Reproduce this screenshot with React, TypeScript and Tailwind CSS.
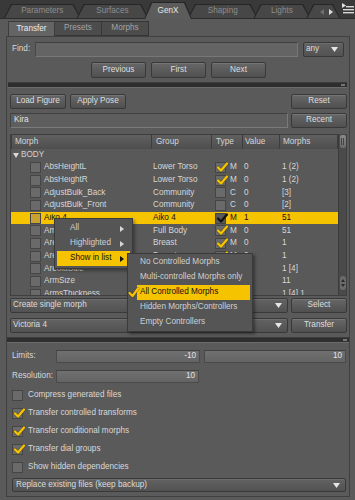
import React from 'react';

const YEL = 'bg-[#f6c300]';

function TriDown() {
  return (
    <svg width="7" height="5" viewBox="0 0 7 5" className="shrink-0">
      <polygon points="0,0 7,0 3.5,5" fill="#e6e6e6" />
    </svg>
  );
}

function TriRight({ color }: { color: string }) {
  return (
    <svg width="4" height="6" viewBox="0 0 4 6" className="shrink-0">
      <polygon points="0,0 4,3 0,6" fill={color} />
    </svg>
  );
}

function CheckMark({ dark }: { dark?: boolean }) {
  return (
    <svg
      width="13"
      height="12"
      viewBox="0 0 13 12"
      className="absolute left-[0px] top-[-2px] overflow-visible"
    >
      {!dark && (
        <polyline
          points="2,6.5 5,9.5 11,2.5"
          fill="none"
          stroke="#3a3000"
          strokeWidth="3.4"
          strokeLinecap="round"
          strokeLinejoin="round"
          opacity="0.45"
        />
      )}
      <polyline
        points="2,6.5 5,9.5 11,2.5"
        fill="none"
        stroke={dark ? '#111111' : '#f8c400'}
        strokeWidth="2.3"
        strokeLinecap="round"
        strokeLinejoin="round"
      />
    </svg>
  );
}

function Box({ checked, dark, tint }: { checked?: boolean; dark?: boolean; tint?: boolean }) {
  return (
    <div
      className={
        'relative w-[11px] h-[11px] shrink-0 border border-[#454545] ' +
        (tint ? 'bg-[#c9a133]' : dark ? 'bg-[#5a5a5a]' : 'bg-[#6a6a6a]')
      }
    >
      {checked && <CheckMark dark={dark} />}
    </div>
  );
}

function Btn({ label, className }: { label: string; className?: string }) {
  return (
    <div
      className={
        'flex items-center justify-center shrink-0 border border-[#393939] rounded-[2px] bg-linear-to-b from-[#676767] to-[#505050] text-[#dedede] shadow-[inset_0_1px_0_rgba(255,255,255,0.10)] ' +
        (className || '')
      }
    >
      {label}
    </div>
  );
}

function Combo({ label, className }: { label: string; className?: string }) {
  return (
    <div
      className={
        'flex items-center justify-between pl-[2px] pr-[5px] border border-[#393939] rounded-[2px] bg-linear-to-b from-[#626262] to-[#525252] text-[#dcdcdc] shadow-[inset_0_1px_0_rgba(255,255,255,0.08)] ' +
        (className || '')
      }
    >
      <span>{label}</span>
      <TriDown />
    </div>
  );
}

function Splitter({ className }: { className?: string }) {
  return (
    <div
      className={
        'h-[6px] bg-[#2e2e2e] border-t border-[#3c3c3c] border-b border-b-[#6c6c6c] flex items-center justify-end pr-[2px] ' +
        (className || '')
      }
    >
      <div className="w-[4px] h-[2px] bg-[#777]" />
    </div>
  );
}

function Tab({ label, active, className }: { label: React.ReactNode; active?: boolean; className?: string }) {
  return (
    <div
      className={
        'p-[1px] pb-0 bg-[#262626] [clip-path:polygon(7px_0,calc(100%_-_7px)_0,100%_100%,0_100%)] ' +
        (active ? 'h-[17px] -mb-[1px] relative z-10 ' : 'h-[14px] ') +
        (className || '')
      }
    >
      <div
        className={
          'h-full flex items-center justify-center [clip-path:polygon(7px_0,calc(100%_-_7px)_0,100%_100%,0_100%)] ' +
          (active ? 'bg-[#5c5c5c] text-[#e6e6e6] pt-[1px]' : 'bg-[#474747] text-[#8d8d8d]')
        }
      >
        {label}
      </div>
    </div>
  );
}

type Row = { n: string; g: string; c: boolean; t: string; v: string; m: string; hl?: boolean };
const rows: Row[] = [
  { n: 'AbsHeightL', g: 'Lower Torso', c: true, t: 'M', v: '0', m: '1 (2)' },
  { n: 'AbsHeightR', g: 'Lower Torso', c: true, t: 'M', v: '0', m: '1 (2)' },
  { n: 'AdjustBulk_Back', g: 'Community', c: false, t: 'C', v: '0', m: '[3]' },
  { n: 'AdjustBulk_Front', g: 'Community', c: false, t: 'C', v: '0', m: '[2]' },
  { n: 'Aiko 4', g: 'Aiko 4', c: true, t: 'M', v: '1', m: '51', hl: true },
  { n: 'Amazon', g: 'Full Body', c: true, t: 'M', v: '0', m: '51' },
  { n: 'AreolaPerk', g: 'Breast', c: true, t: 'M', v: '0', m: '1' },
  { n: 'AreolaPuffy', g: 'Breast', c: true, t: 'M', v: '0', m: '1' },
  { n: 'AreolaSize', g: 'Breast', c: true, t: 'M', v: '0', m: '1 [4]' },
  { n: 'ArmSize', g: 'Arms', c: true, t: 'M', v: '0', m: '11' },
  { n: 'ArmsThickness', g: 'Arms', c: true, t: 'M', v: '0', m: '1 [4] 1' },
];

function HeadCell({ label, className }: { label: string; className?: string }) {
  return (
    <div
      className={
        'h-full flex items-center border-r border-[#3d3d3d] bg-linear-to-b from-[#606060] to-[#4e4e4e] text-[#d6d6d6] ' +
        (className || '')
      }
    >
      {label}
    </div>
  );
}

function Field({ value, className }: { value: string; className?: string }) {
  return (
    <div
      className={
        'h-full flex items-center justify-end pr-[3px] bg-linear-to-b from-[#707070] to-[#646464] border border-[#4a4a4a] border-t-[#424242] text-[#e4e4e4] ' +
        (className || '')
      }
    >
      {value}
    </div>
  );
}

export default function App() {
  return (
    <div className="w-[355px] h-[500px] overflow-hidden bg-[#585858] font-['Liberation_Sans',Arial,sans-serif] text-[8.2px] leading-none select-none">
      {/* main tab strip */}
      <div className="h-[18px] bg-[#393939] flex items-end pl-[4px]">
        <Tab label="Parameters" className="w-[77px]" />
        <Tab label="Surfaces" className="w-[72px] -ml-[4px]" />
        <Tab label="GenX" active className="w-[48px] -ml-[4px]" />
        <Tab label="Shaping" className="w-[70px] -ml-[4px]" />
        <Tab label="Lights" className="w-[57px] -ml-[4px]" />
        <Tab
          label={
            <div className="flex items-center gap-[5px] pl-[6px]">
              <svg width="4" height="6" viewBox="0 0 4 6">
                <polygon points="4,0 0,3 4,6" fill="#6f6f6f" />
              </svg>
              <TriRight color="#dcdcdc" />
            </div>
          }
          className="w-[34px] -ml-[4px]"
        />
        <div className="w-[15px] h-[18px] flex items-start justify-center pt-[3px]">
          <svg width="12" height="12" viewBox="0 0 12 12">
            <polygon points="0,0 4,2.5 0,5" fill="#e0e0e0" />
            <rect x="4" y="3" width="8" height="1.4" fill="#d8d8d8" />
            <rect x="1" y="6" width="11" height="1.4" fill="#d8d8d8" />
            <rect x="1" y="9" width="11" height="1.4" fill="#d8d8d8" />
          </svg>
        </div>
      </div>

      {/* outer panel */}
      <div className="h-[482px] border-t border-[#2c2c2c] bg-[#5a5a5a] flex flex-col">
        {/* sub tabs */}
        <div className="flex h-[15px] mt-[2px] ml-[8px]">
          <div className="w-[47px] h-full flex items-center justify-center bg-[#646464] border border-[#3d3d3d] border-b-0 text-[#ececec] relative z-10 -mb-[1px]">
            Transfer
          </div>
          <div className="w-[47px] h-full flex items-center justify-center bg-[#4c4c4c] border border-[#363636] border-l-0 text-[#a3a3a3]">
            Presets
          </div>
          <div className="w-[47px] h-full flex items-center justify-center bg-[#4c4c4c] border border-[#363636] border-l-0 text-[#a3a3a3]">
            Morphs
          </div>
        </div>

        {/* content frame */}
        <div className="relative ml-[6px] w-[344px] h-[461px] border border-[#404040] bg-[#5a5a5a] pl-[3px] pr-[2px] flex flex-col text-[#d8d8d8]">
          {/* find row */}
          <div className="mt-[5px] h-[15px] flex items-center">
            <div className="ml-[2px] w-[23px]">Find:</div>
            <div className="flex-1 h-full bg-[#646464] border border-[#777] border-t-[#3e3e3e] border-l-[#474747]" />
            <Combo label="any" className="ml-[5px] mr-[3px] w-[41px] h-full" />
          </div>

          {/* nav buttons */}
          <div className="mt-[5px] h-[16px] flex gap-[5px] pl-[81px]">
            <Btn label="Previous" className="w-[55px] h-full" />
            <Btn label="First" className="w-[55px] h-full" />
            <Btn label="Next" className="w-[55px] h-full" />
          </div>

          <Splitter className="mt-[4px] -ml-[2px]" />

          {/* load row */}
          <div className="mt-[6px] h-[15px] flex">
            <Btn label="Load Figure" className="w-[56px] h-full" />
            <Btn label="Apply Pose" className="ml-[4px] w-[56px] h-full" />
            <div className="flex-1" />
            <Btn label="Reset" className="w-[56px] h-full" />
          </div>

          {/* figure row */}
          <div className="mt-[4px] h-[15px] flex">
            <div className="flex-1 h-full flex items-center pl-[3px] bg-[#5e5e5e] border border-[#7a7a7a] border-t-[#404040] border-l-[#444] text-[#e2e2e2]">
              Kira
            </div>
            <Btn label="Recent" className="ml-[3px] w-[56px] h-full" />
          </div>

          {/* table */}
          <div className="mt-[6px] h-[162px] flex border border-[#3f3f3f] border-t-0">
            <div className="flex-1 flex flex-col overflow-hidden">
              <div className="h-[15px] flex shrink-0 border-t border-[#3d3d3d]">
                <HeadCell label="Morph" className="w-[141px] pl-[3px] border-l border-l-[#3d3d3d]" />
                <HeadCell label="Group" className="w-[60px] pl-[4px]" />
                <HeadCell label="Type" className="w-[31px] pl-[4px]" />
                <HeadCell label="Value" className="w-[37px] pl-[2px]" />
                <HeadCell label="Morphs" className="flex-1 pl-[3px]" />
              </div>
              <div className="flex-1 overflow-hidden bg-[#595959]">
                <div className="h-[12px] flex items-center pl-[2px] gap-[2px] text-[#d2d2d2]">
                  <svg width="6" height="5" viewBox="0 0 6 5">
                    <polygon points="0,0 6,0 3,5" fill="#d8d8d8" />
                  </svg>
                  <span>BODY</span>
                </div>
                {rows.map((r) => (
                  <div
                    key={r.n}
                    className={
                      'h-[12.7px] flex items-center ' +
                      (r.hl ? YEL + ' text-[#111]' : 'text-[#d6d6d6]')
                    }
                  >
                    <div className="w-[19px] shrink-0" />
                    <Box tint={r.hl} />
                    <div className="w-[110px] pl-[3px] shrink-0 whitespace-nowrap overflow-hidden">{r.n}</div>
                    <div className="w-[62px] pl-[2px] shrink-0 whitespace-nowrap">{r.g}</div>
                    <div className="w-[29px] pl-[2px] shrink-0 flex items-center gap-[4px]">
                      <Box checked={r.c} dark={r.hl} />
                      <span>{r.t}</span>
                    </div>
                    <div className="w-[38px] pl-[2px] shrink-0">{r.v}</div>
                    <div className="flex-1 pl-[2px] whitespace-nowrap">{r.m}</div>
                  </div>
                ))}
              </div>
            </div>
            {/* scrollbar */}
            <div className="w-[8px] bg-[#4a4a4a] border-l border-[#3c3c3c] flex flex-col items-center justify-between py-[1px]">
              <div className="w-[6px] h-[13px] rounded-[2px] bg-linear-to-b from-[#8a8a8a] to-[#6a6a6a] flex items-center justify-center gap-[1px]">
                <div className="w-[1px] h-[7px] bg-[#444]" />
                <div className="w-[1px] h-[7px] bg-[#444]" />
              </div>
              <div className="w-[6px] h-[14px] mb-[4px] rounded-[3px] bg-[#6b6b6b] flex flex-col items-center justify-center gap-[2px]">
                <svg width="4" height="3" viewBox="0 0 4 3">
                  <polygon points="0,3 4,3 2,0" fill="#2a2a2a" />
                </svg>
                <svg width="4" height="3" viewBox="0 0 4 3">
                  <polygon points="0,0 4,0 2,3" fill="#2a2a2a" />
                </svg>
              </div>
            </div>
          </div>

          {/* create row */}
          <div className="mt-[2px] h-[15px] flex">
            <Combo label="Create single morph" className="flex-1 h-full" />
            <Btn label="Select" className="ml-[3px] w-[56px] h-full" />
          </div>
          <div className="mt-[5px] h-[15px] flex">
            <Combo label="Victoria 4" className="flex-1 h-full" />
            <Btn label="Transfer" className="ml-[3px] w-[56px] h-full" />
          </div>

          <Splitter className="mt-[4px] -ml-[3px] -mr-[2px]" />

          {/* limits */}
          <div className="mt-[7px] h-[13px] flex items-center">
            <div className="ml-[2px] w-[44px]">Limits:</div>
            <Field value="-10" className="w-[144px]" />
            <Field value="10" className="ml-[4px] flex-1 mr-[1px]" />
          </div>
          <div className="mt-[7px] h-[13px] flex items-center">
            <div className="ml-[2px] w-[44px]">Resolution:</div>
            <Field value="10" className="w-[143px]" />
          </div>

          {/* checkboxes */}
          <div className="mt-[3px] flex flex-col">
            {[
              ['Compress generated files', false],
              ['Transfer controlled transforms', true],
              ['Transfer conditional morphs', true],
              ['Transfer dial groups', true],
              ['Show hidden dependencies', false],
            ].map(([label, on]) => (
              <div key={label as string} className="h-[18px] flex items-center pl-[2px] gap-[5px]">
                <Box checked={on as boolean} />
                <span>{label as string}</span>
              </div>
            ))}
          </div>

          <Combo label="Replace existing files (keep backup)" className="mt-[2px] h-[14px] ml-[2px] mr-[1px] pl-[3px]" />

          {/* context menu */}
          <div className="absolute left-[47px] top-[181px] w-[79px] h-[51px] z-20 bg-[#555] border border-[#3a3a3a] shadow-[2px_2px_3px_rgba(0,0,0,0.35)] pt-[2px] px-[2px] text-[#d0d0d0]">
            <div className="h-[15px] flex items-center justify-between pl-[13px] pr-[6px]">
              <span>All</span>
              <TriRight color="#d8d8d8" />
            </div>
            <div className="h-[15px] flex items-center justify-between pl-[13px] pr-[6px]">
              <span>Highlighted</span>
              <TriRight color="#d8d8d8" />
            </div>
            <div className={'h-[15px] flex items-center justify-between pl-[13px] pr-[6px] text-[#111] ' + YEL}>
              <span>Show in list</span>
              <TriRight color="#111" />
            </div>
          </div>

          {/* submenu */}
          <div className="absolute left-[120px] top-[216px] w-[126px] h-[79px] z-30 bg-[#555] border border-[#3a3a3a] shadow-[2px_2px_3px_rgba(0,0,0,0.4)] pt-[1px] pr-[2px] text-[#d0d0d0]">
            <div className="h-[15px] flex items-center pl-[12px]">No Controlled Morphs</div>
            <div className="h-[15px] flex items-center pl-[12px]">Multi-controlled Morphs only</div>
            <div className="relative h-[15px] flex items-center">
              <div className="w-[9px] shrink-0 relative h-[11px]">
                <svg width="12" height="11" viewBox="0 0 12 11" className="absolute left-[0px] top-[0px] overflow-visible">
                  <polyline points="1.5,6 4.5,9 10,1.5" fill="none" stroke="#3a3000" strokeWidth="3.2" strokeLinecap="round" strokeLinejoin="round" opacity="0.5" />
                  <polyline points="1.5,6 4.5,9 10,1.5" fill="none" stroke="#f8c400" strokeWidth="2.2" strokeLinecap="round" strokeLinejoin="round" />
                </svg>
              </div>
              <div className={'flex-1 h-full flex items-center pl-[3px] text-[#111] ' + YEL}>All Controlled Morphs</div>
            </div>
            <div className="h-[15px] flex items-center pl-[12px]">Hidden Morphs/Controllers</div>
            <div className="h-[15px] flex items-center pl-[12px]">Empty Controllers</div>
          </div>
        </div>
      </div>
    </div>
  );
}
